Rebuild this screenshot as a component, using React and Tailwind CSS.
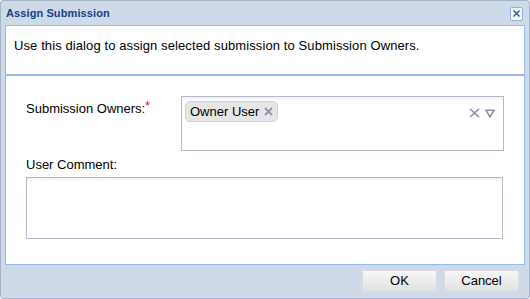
import React from "react";

export default function App() {
  return (
    <div className="w-[530px] h-[299px] bg-[#cedae8] border border-[#a5b3c7] rounded-[3px] flex flex-col font-['Liberation_Sans',Arial,sans-serif] text-[13px] text-black overflow-hidden">
      <div className="h-[24px] flex items-center justify-between pl-[5px] pr-[6px]">
        <span className="font-bold text-[11px] text-[#15428b] tracking-[0.1px]">Assign Submission</span>
        <div className="w-[13px] h-[14px] mt-[1px] bg-[#f2f6fb] border border-[#8fb0dc] rounded-[2px] flex items-center justify-center">
          <svg width="9" height="9" viewBox="0 0 9 9">
            <path d="M1.5 1.5 L7.5 7.5 M7.5 1.5 L1.5 7.5" stroke="#2a56a0" strokeWidth="1.4" />
          </svg>
        </div>
      </div>
      <div className="mx-[4px] flex-1 bg-white border border-[#99bbe8] flex flex-col">
        <div className="h-[48px] px-[8px] pt-[10px] tracking-[0.1px]">Use this dialog to assign selected submission to Submission Owners.</div>
        <div className="flex-1 border-t-2 border-[#99bbe8] pt-[20px] pl-[20px] pr-[20px] flex flex-col">
          <div className="flex">
            <div className="w-[155px] pt-[3px]">
              Submission Owners:<span className="text-[#e00000] align-top text-[12px] relative top-[-2px]">*</span>
            </div>
            <div className="flex-1 h-[55px] border border-[#b5b8c8] bg-gradient-to-b from-[#f0f0f0] to-white bg-[length:100%_4px] bg-no-repeat bg-white flex items-start pl-[3px] pt-[4px] pr-[8px]">
              <div className="h-[21px] w-[93px] bg-[#e6e6e6] border border-[#d0d0d0] rounded-[5px] flex items-center pl-[4px] gap-[5px]">
                <span>Owner User</span>
                <svg width="9" height="9" viewBox="0 0 9 9">
                  <path d="M1 1 L8 8 M8 1 L1 8" stroke="#8a93a8" strokeWidth="1.8" />
                </svg>
              </div>
              <div className="flex-1" />
              <div className="flex items-center gap-[5px] mt-[7px]">
                <svg width="11" height="10" viewBox="0 0 11 10">
                  <path d="M1 1 L10 9 M10 1 L1 9" stroke="#8690a6" strokeWidth="1.6" />
                </svg>
                <svg width="10" height="9" viewBox="0 0 10 9">
                  <path d="M1 1.2 H9 L5 8 Z" fill="none" stroke="#8690a6" strokeWidth="1.6" strokeLinejoin="miter" />
                </svg>
              </div>
            </div>
          </div>
          <div className="mt-[6px] h-[15px] leading-[15px]">User Comment:</div>
          <div className="mt-[5px] h-[62px] mr-[1px] border border-[#b5b8c8] bg-gradient-to-b from-[#f0f0f0] to-white bg-[length:100%_4px] bg-no-repeat bg-white" />
        </div>
      </div>
      <div className="h-[33px] flex items-center justify-end gap-[7px] pr-[10px] pb-[1px]">
        <button className="w-[75px] h-[22px] border border-[#dcdcdc] bg-gradient-to-b from-[#f7f7f7] to-[#e1e1e1] text-[13px]">OK</button>
        <button className="w-[75px] h-[22px] border border-[#dcdcdc] bg-gradient-to-b from-[#f7f7f7] to-[#e1e1e1] text-[13px]">Cancel</button>
      </div>
    </div>
  );
}
